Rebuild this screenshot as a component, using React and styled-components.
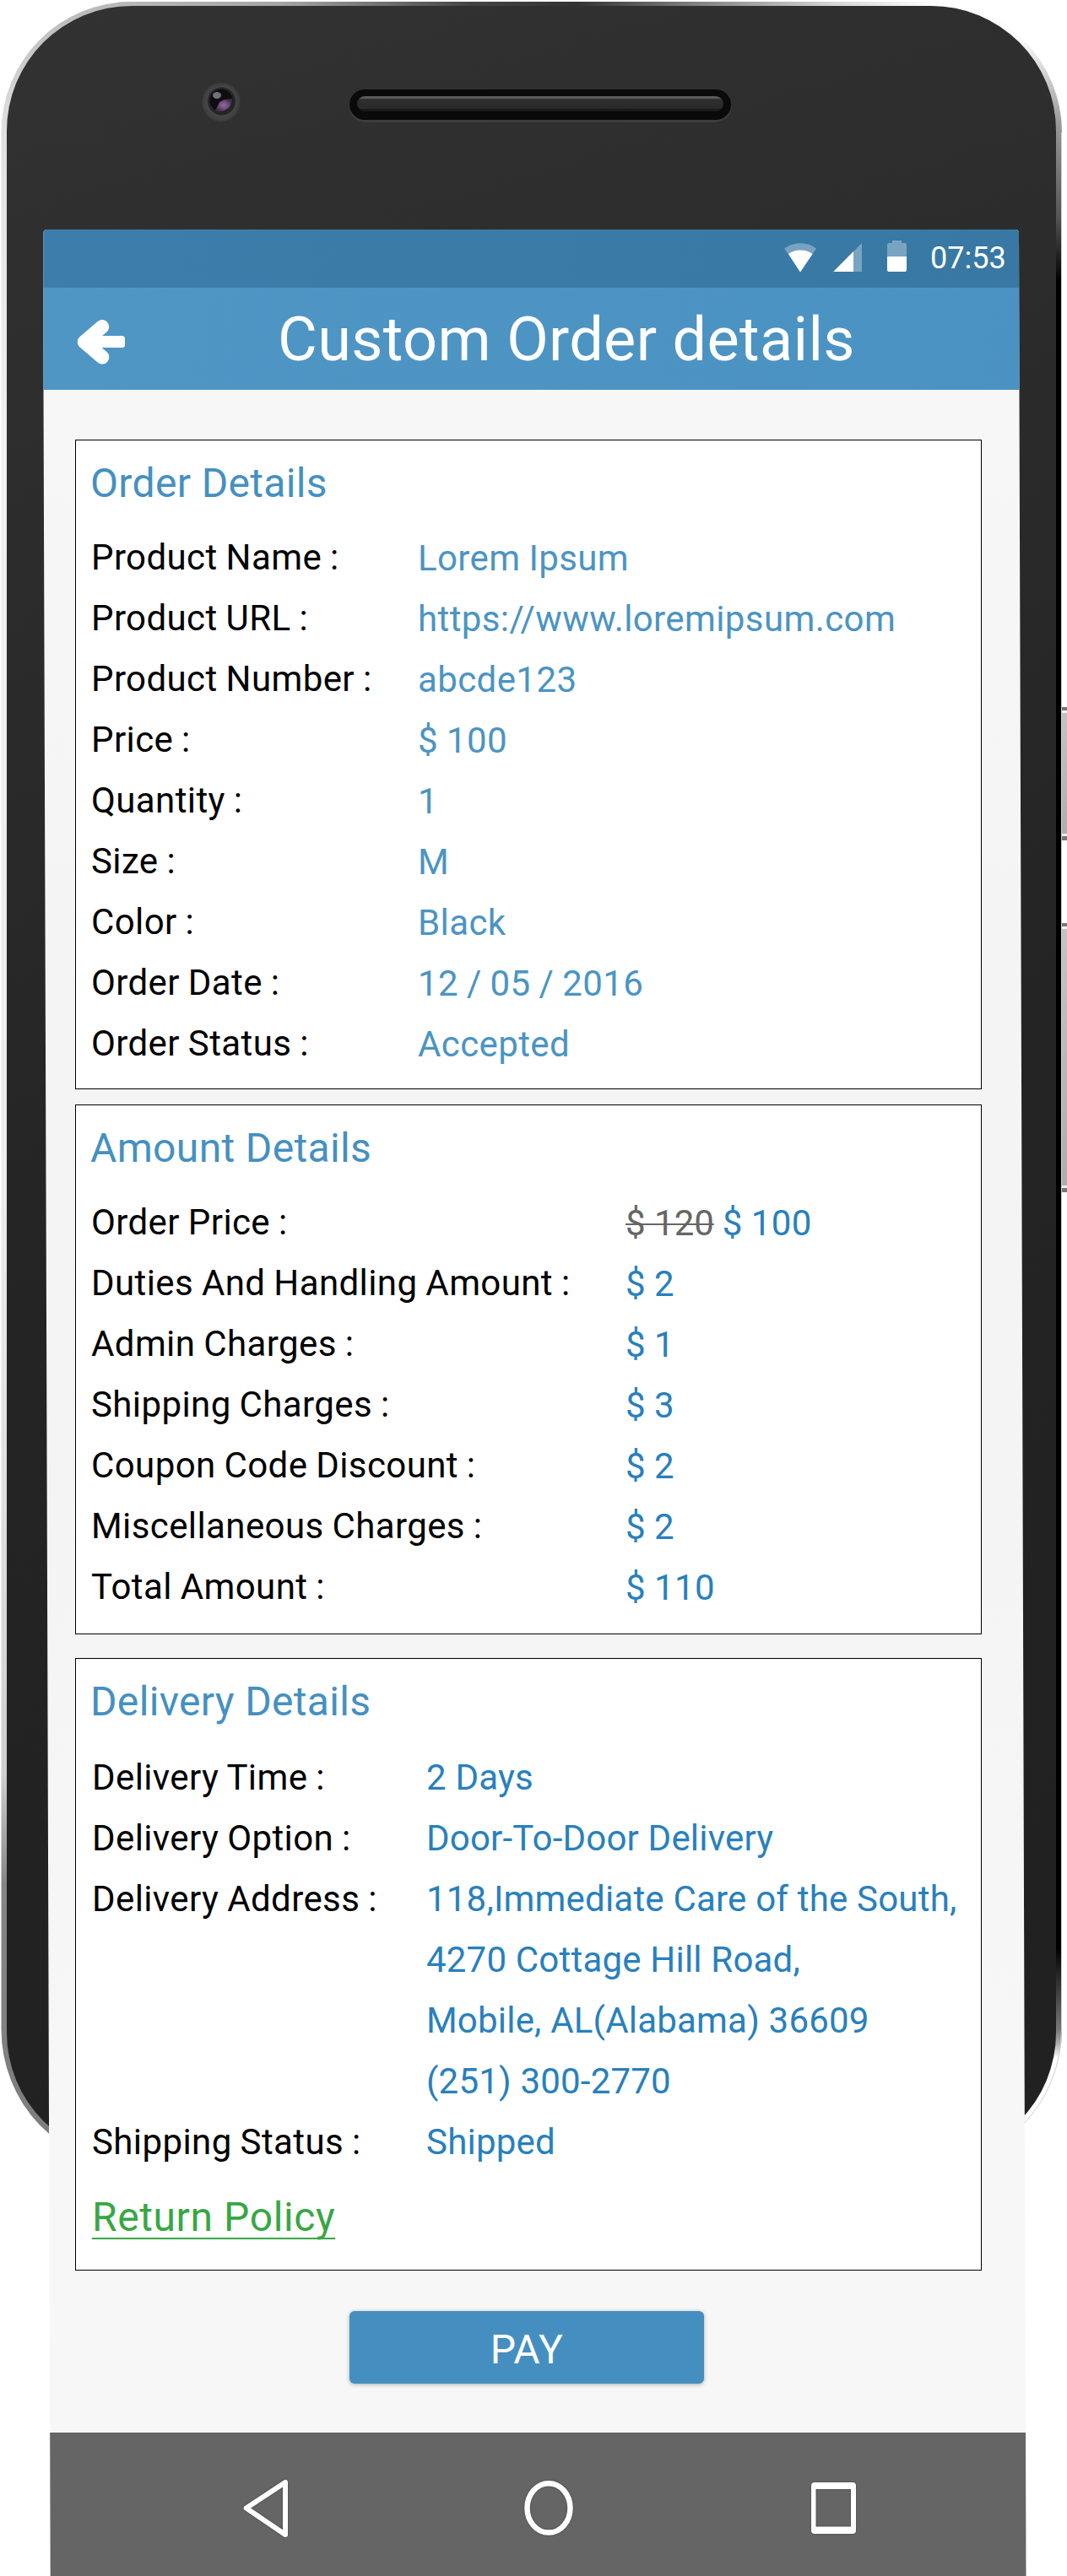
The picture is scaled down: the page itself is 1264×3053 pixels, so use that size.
import React from "react";
import styled, { createGlobalStyle } from "styled-components";

const GlobalStyle = createGlobalStyle`
  *, *::before, *::after { box-sizing: border-box; }
  body { margin: 0; background: #fff; }
`;

const Page = styled.div`
  position: relative;
  width: 1264px;
  height: 3053px;
  padding: 272px 0 0 51px;
  overflow: hidden;
  font-family: Roboto, "Liberation Sans", sans-serif;
`;

const Handset = styled.svg`
  position: absolute;
  inset: 0;
`;

const Screen = styled.main`
  position: relative;
  display: flex;
  flex-direction: column;
  width: 1165px;
  height: 2781px;
  background: linear-gradient(#f7f7f7 190px, #f4f4f4 900px, #f4f4f4 1500px, #f7f7f7 2200px);
  clip-path: polygon(0.3px 3px, 2.5px 0, 1154px 0, 1156px 3px, 1156.5px 190px, 1164.5px 2781px, 8.7px 2781px, 0.5px 190px);
`;

const StatusBar = styled.div`
  display: flex;
  align-items: flex-start;
  height: 69px;
  padding: 13px 0 0 878px;
  background: linear-gradient(100deg, #3d7dab, #3878a3);
`;

const Clock = styled.time`
  margin-left: 28px;
  font-size: 36px;
  line-height: 42px;
  color: #fff;
`;

const AppBar = styled.header`
  display: flex;
  align-items: center;
  height: 121px;
  padding-left: 40px;
  background: linear-gradient(100deg, #4f96c5, #4a92c1);
`;

const BackButton = styled.button`
  display: flex;
  margin-top: 6px;
  padding: 0;
  border: 0;
  background: none;
`;

const Title = styled.h1`
  margin: 2px 0 0 180px;
  font-size: 72px;
  font-weight: 400;
  line-height: 84px;
  letter-spacing: 0.36px;
  color: #fff;
  white-space: nowrap;
`;

const Content = styled.div`
  display: flex;
  flex-direction: column;
  width: 1074px;
  margin: 59px 0 0 38px;
`;

const Section = styled.section`
  display: flex;
  flex-direction: column;
  height: ${(p) => p.$height}px;
  margin-bottom: ${(p) => p.$gap}px;
  padding: 21px 0 0 17px;
  border: 1px solid #000;
  background: #fff;
`;

const SectionTitle = styled.h2`
  margin: 0 0 ${(p) => p.$space}px;
  font-size: 48px;
  font-weight: 400;
  line-height: 60px;
  letter-spacing: 0.35px;
  color: #4590c1;
`;

const Fields = styled.dl`
  display: grid;
  grid-template-columns: ${(p) => p.$labelWidth}px 1fr;
  margin: 0 0 0 ${(p) => p.$indent}px;
  font-size: 42px;
  line-height: 72px;
  letter-spacing: 0.4px;
  word-spacing: -0.9px;
  white-space: nowrap;
`;

const Label = styled.dt`
  color: #000;
`;

const Value = styled.dd`
  margin: 0;
  padding-top: ${(p) => p.$drop || 0}px;
  margin-bottom: -${(p) => p.$drop || 0}px;
  color: ${(p) => p.$color};
  letter-spacing: ${(p) => p.$tracking}px;
  word-spacing: ${(p) => (p.$tracking < 0.3 ? 0 : -0.9)}px;
  white-space: pre-line;
`;

const OldPrice = styled.del`
  color: #666;
  letter-spacing: 0;
  word-spacing: 0;
  text-decoration-thickness: 2px;
`;

const PolicyLink = styled.a`
  align-self: flex-start;
  margin: 23px 0 0 2px;
  font-size: 48px;
  line-height: 60px;
  letter-spacing: 0.6px;
  color: #37a743;
  text-decoration: underline;
  text-decoration-thickness: 2px;
  text-decoration-skip-ink: none;
  text-underline-offset: 8px;
`;

const PayButton = styled.button`
  align-self: center;
  width: 420px;
  height: 86px;
  margin: 48px 4px 0 0;
  padding: 5px 0 0;
  border: 0;
  border-radius: 6px;
  background: #458fc0;
  box-shadow: 0 1px 5px rgba(0, 0, 0, 0.3);
  font: 400 48px/60px Roboto, "Liberation Sans", sans-serif;
  letter-spacing: 0.5px;
  color: #fff;
`;

const NavBar = styled.nav`
  display: flex;
  align-items: flex-start;
  height: 170px;
  margin-top: auto;
  padding: 53px 0 0 234px;
  background: #656565;
`;

const NavIcon = styled.svg`
  margin-left: ${(p) => p.$before || 0}px;
  fill: none;
  stroke: #fff;
  filter: drop-shadow(0 0 1px rgba(0, 0, 0, 0.35));
`;

const ORDER = [
  ["Product Name :", "Lorem Ipsum"],
  ["Product URL :", "https://www.loremipsum.com"],
  ["Product Number :", "abcde123"],
  ["Price :", "$ 100"],
  ["Quantity :", "1"],
  ["Size :", "M"],
  ["Color :", "Black"],
  ["Order Date :", "12 / 05 / 2016"],
  ["Order Status :", "Accepted"],
];

const AMOUNT = [
  ["Order Price :", <><OldPrice>$ 120</OldPrice> $ 100</>],
  ["Duties And Handling Amount :", "$ 2"],
  ["Admin Charges :", "$ 1"],
  ["Shipping Charges :", "$ 3"],
  ["Coupon Code Discount :", "$ 2"],
  ["Miscellaneous Charges :", "$ 2"],
  ["Total Amount :", "$ 110"],
];

const DELIVERY = [
  ["Delivery Time :", "2 Days"],
  ["Delivery Option :", "Door-To-Door Delivery"],
  [
    "Delivery Address :",
    "118,Immediate Care of the South,\n4270 Cottage Hill Road,\nMobile, AL(Alabama) 36609\n(251) 300-2770",
  ],
  ["Shipping Status :", "Shipped"],
];

function FieldList({ rows, labelWidth, color, drop, indent = 1, tracking = 0.4 }) {
  return (
    <Fields $labelWidth={labelWidth} $indent={indent}>
      {rows.map(([label, value]) => (
        <React.Fragment key={label}>
          <Label>{label}</Label>
          <Value $color={color} $drop={drop} $tracking={tracking}>{value}</Value>
        </React.Fragment>
      ))}
    </Fields>
  );
}

function SideKey({ y, height }) {
  return (
    <g>
      <rect x="1257" y={y} width="8" height={height} fill="url(#key)" />
      <rect x="1257" y={y} width="8" height="4" fill="#777" />
      <rect x="1257" y={y + 4} width="8" height="3" fill="#f4f4f4" />
      <rect x="1257" y={y + height - 8} width="8" height="3" fill="#eee" />
      <rect x="1257" y={y + height - 5} width="8" height="5" fill="#777" />
    </g>
  );
}

function Phone() {
  return (
    <Handset width="1264" height="3053" viewBox="0 0 1264 3053" aria-hidden="true">
      <defs>
        <clipPath id="shell">
          <path d="M156 2H1103A155 155 0 0 1 1258 157V2405A155 160 0 0 1 1103 2565H156A154.500 160 0 0 1 1.500 2405V157A154.500 155 0 0 1 156 2Z" />
        </clipPath>
        <linearGradient id="rimLeft" gradientUnits="userSpaceOnUse" x1="0" y1="0" x2="0" y2="2565">
          <stop offset="0" stopColor="#b8b8b8" />
          <stop offset=".06" stopColor="#e0e0e0" />
          <stop offset=".2" stopColor="#f0f0f0" />
          <stop offset=".55" stopColor="#ececec" />
          <stop offset=".7" stopColor="#dedede" />
          <stop offset=".82" stopColor="#cfcfcf" />
          <stop offset=".87" stopColor="#858585" />
          <stop offset="1" stopColor="#7c7c7c" />
        </linearGradient>
        <linearGradient id="rimTop" gradientUnits="userSpaceOnUse" x1="140" y1="0" x2="1110" y2="0">
          <stop offset="0" stopColor="#b8b8b8" />
          <stop offset=".2" stopColor="#a5a5a5" />
          <stop offset=".43" stopColor="#444" />
          <stop offset=".56" stopColor="#333" />
          <stop offset=".72" stopColor="#888" />
          <stop offset=".88" stopColor="#d8d8d8" />
          <stop offset="1" stopColor="#fff" />
        </linearGradient>
        <linearGradient id="rimRight" gradientUnits="userSpaceOnUse" x1="0" y1="0" x2="0" y2="2565">
          <stop offset="0" stopColor="#fff" />
          <stop offset=".018" stopColor="#fafafa" />
          <stop offset=".035" stopColor="#d0d0d0" />
          <stop offset=".057" stopColor="#999" />
          <stop offset=".1" stopColor="#555" />
          <stop offset=".13" stopColor="#000" />
          <stop offset=".9" stopColor="#000" />
          <stop offset=".938" stopColor="#777" />
          <stop offset=".944" stopColor="#aaa" />
          <stop offset=".951" stopColor="#fff" />
        </linearGradient>
        <linearGradient id="glass" x1="0" y1="0" x2=".15" y2="1">
          <stop offset="0" stopColor="#323232" />
          <stop offset=".25" stopColor="#2c2c2c" />
          <stop offset=".6" stopColor="#242424" />
          <stop offset="1" stopColor="#212121" />
        </linearGradient>
        <linearGradient id="slot" x1="0" y1="0" x2="0" y2="1">
          <stop offset="0" stopColor="#5c5c5c" />
          <stop offset=".13" stopColor="#5c5c5c" />
          <stop offset=".2" stopColor="#2f2f2f" />
          <stop offset=".8" stopColor="#292929" />
          <stop offset=".87" stopColor="#191919" />
          <stop offset="1" stopColor="#191919" />
        </linearGradient>
        <linearGradient id="key" x1="0" y1="0" x2="0" y2="1">
          <stop offset="0" stopColor="#c4c4c4" />
          <stop offset="1" stopColor="#adadad" />
        </linearGradient>
        <radialGradient id="halo">
          <stop offset=".68" stopColor="#484848" />
          <stop offset="1" stopColor="#3c3c3c" />
        </radialGradient>
        <radialGradient id="flare">
          <stop offset="0" stopColor="#99679f" />
          <stop offset=".5" stopColor="#725080" />
          <stop offset="1" stopColor="#383241" />
        </radialGradient>
      </defs>

      <SideKey y={838} height={158} />
      <SideKey y={1094} height={319} />

      <g clipPath="url(#shell)">
        <rect x="0" y="0" width="640" height="2570" fill="url(#rimLeft)" />
        <rect x="640" y="0" width="624" height="2570" fill="url(#rimRight)" />
        <rect x="140" y="0" width="970" height="12" fill="url(#rimTop)" />
      </g>
      <path d="M1257.500 157V2405A154.500 160 0 0 1 1103 2564.500" fill="none" stroke="#d0d0d0" />
      <path d="M156 7H1103A148 148 0 0 1 1251 155V2409A148 148 0 0 1 1103 2557H156A148 148 0 0 1 8 2409V155A148 148 0 0 1 156 7Z" fill="url(#glass)" />

      <ellipse cx="262" cy="121" rx="22.500" ry="23" fill="url(#halo)" />
      <circle cx="262.500" cy="120" r="16.500" fill="#25252b" />
      <circle cx="262" cy="119" r="13.500" fill="#0e0e10" />
      <path d="M275 117A14 14 0 0 1 255 131L260 121L265 118Z" fill="url(#flare)" />
      <ellipse cx="257" cy="113" rx="5" ry="4" fill="#76707b" />

      <rect x="413.500" y="107" width="453" height="38" rx="19" fill="#3c3c3c" />
      <rect x="414" y="106" width="452" height="36" rx="18" fill="#0a0a0a" />
      <rect x="423" y="114" width="434" height="18" rx="9" fill="url(#slot)" />
    </Handset>
  );
}

export default function App() {
  return (
    <Page>
      <GlobalStyle />
      <Phone />
      <Screen>
        <StatusBar>
          <svg width="145" height="38" viewBox="929 285 145 38" fill="#fff" aria-hidden="true">
            <path d="M929.300 294.500A32 32 0 0 1 967 294.500L948 322.500Z" opacity=".32" />
            <path d="M934 301A25 25 0 0 1 962.500 301L948 322.500Z" />
            <path d="M1021 288V322H987.300Z" opacity=".32" />
            <path d="M1011 298V322H987.300Z" />
            <path d="M1057 285H1068V288H1072Q1074 288 1074 290V304H1051V290Q1051 288 1053 288H1057Z" opacity=".32" />
            <path d="M1051 304H1074V320Q1074 322 1072 322H1053Q1051 322 1051 320Z" />
          </svg>
          <Clock>07:53</Clock>
        </StatusBar>
        <AppBar>
          <BackButton aria-label="Back">
            <svg width="58" height="54" viewBox="91 378 58 54" aria-hidden="true">
              <path d="M121 387.300L100 405.300L121 423.300" fill="none" stroke="#fff" strokeWidth="16.500" strokeLinecap="round" strokeLinejoin="round" />
              <rect x="100" y="398" width="48" height="14" rx="3.500" fill="#fff" />
            </svg>
          </BackButton>
          <Title>Custom Order details</Title>
        </AppBar>

        <Content>
          <Section $height={770} $gap={18}>
            <SectionTitle $space={22}>Order Details</SectionTitle>
            <FieldList rows={ORDER} labelWidth={387} color="#4b94c3" drop={1} />
          </Section>
          <Section $height={628} $gap={28}>
            <SectionTitle $space={22}>Amount Details</SectionTitle>
            <FieldList rows={AMOUNT} labelWidth={633} color="#2880bd" drop={1} />
          </Section>
          <Section $height={726} $gap={0}>
            <SectionTitle $space={24}>Delivery Details</SectionTitle>
            <FieldList rows={DELIVERY} labelWidth={396} color="#2880bd" indent={2} tracking={0.2} />
            <PolicyLink>Return Policy</PolicyLink>
          </Section>
          <PayButton>PAY</PayButton>
        </Content>

        <NavBar>
          <NavIcon $before={3} width="54" height="72" viewBox="288 2936 54 72" strokeWidth="6" strokeLinejoin="round">
            <path d="M291.700 2972.500L338 2942V3004Z" />
          </NavIcon>
          <NavIcon $before={279} width="60" height="72" viewBox="621 2936 60 72" strokeWidth="6.500">
            <ellipse cx="650" cy="2972.400" rx="25.500" ry="29.200" />
          </NavIcon>
          <NavIcon $before={279} width="54" height="72" viewBox="960 2936 54 72">
            <path d="M965 2942H1010Q1014 2942 1014 2946V2999Q1014 3003 1010 3003H965Q961 3003 961 2999V2946Q961 2942 965 2942ZM966.500 2950V2994.500H1008V2950Z" fill="#fff" fillRule="evenodd" stroke="none" />
          </NavIcon>
        </NavBar>
      </Screen>
    </Page>
  );
}
